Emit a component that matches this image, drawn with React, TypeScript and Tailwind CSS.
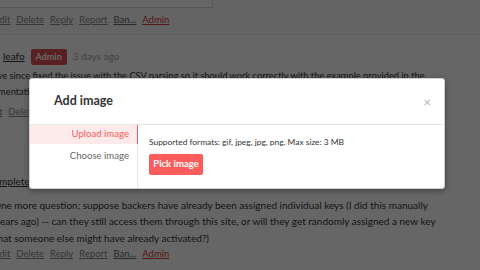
import React from 'react';

const font = { fontFamily: 'Lato, "Noto Sans", sans-serif' };

function ActionLinks({ className = '' }: { className?: string }) {
    return (
        <div className={`flex items-center gap-[6px] text-[9.5px] ${className}`}>
            <span className="text-[#888] underline">Edit</span>
            <span className="text-[#888] underline">Delete</span>
            <span className="text-[#888] underline">Reply</span>
            <span className="text-[#888] underline">Report</span>
            <span className="text-[#666] underline">Ban...</span>
            <span className="text-[#d93636] underline">Admin</span>
        </div>
    );
}

function AddImageModal() {
    return (
        <div className="w-[416px] rounded-[3px] border border-[#d0d0d0] bg-white shadow-[0_2px_6px_rgba(0,0,0,0.35)]">
            {/* Header */}
            <div className="flex h-[46px] items-center justify-between border-b border-[#e6e6e6] pl-[24px] pr-[13px]">
                <h2 className="text-[12.5px] font-bold text-[#333]">Add image</h2>
                <span className="mt-[2px] text-[13px] leading-none text-[#b4b4b4]">×</span>
            </div>

            {/* Body */}
            <div className="flex h-[63px]">
                <div className="w-[108px] border-r border-[#e6e6e6] text-right text-[9.6px]">
                    <div className="-mr-px flex h-[19px] items-center justify-end border-r border-[#fa5c5c] bg-[#fdeaea] pr-[8px] text-[#fa5c5c]">
                        Upload image
                    </div>
                    <div className="flex h-[24px] items-center justify-end pr-[8px] text-[#666]">
                        Choose image
                    </div>
                </div>
                <div className="flex flex-col items-start pl-[11px] pt-[12px]">
                    <p className="text-[8.4px] leading-[11px] text-[#333]">
                        Supported formats: gif, jpeg, jpg, png. Max size: 3 MB
                    </p>
                    <button className="mt-[6px] flex h-[21px] w-[54px] items-center justify-center rounded-[2px] bg-[#fa5c5c] text-[9.5px] font-bold text-white">
                        Pick image
                    </button>
                </div>
            </div>
        </div>
    );
}

export default function App() {
    return (
        <div className="relative h-[270px] w-[480px] overflow-hidden bg-white" style={font}>
            {/* Page behind the modal */}
            <div className="flex flex-col">
                {/* Previous comment */}
                <div className="h-[35px] border-b border-[#e4e4e4] bg-[#f9f9f9]">
                    <div className="h-[8px] w-[213px] rounded-br-[2px] border-b border-r border-[#d8d8d8] bg-white" />
                    <ActionLinks className="ml-[-6px] mt-[5px]" />
                </div>

                {/* Reply by leafo */}
                <div className="ml-[3px] flex items-center gap-[6px] pt-[14px] text-[10px]">
                    <span className="text-[#333] underline">leafo</span>
                    <span className="rounded-[2px] bg-[#dc5050] px-[5px] py-[1px] text-[9px] font-bold text-white">
                        Admin
                    </span>
                    <span className="text-[#a8a8a8]">3 days ago</span>
                </div>
                <div className="ml-[-7px] mt-[3px] w-[470px] whitespace-nowrap text-[9.3px] leading-[16px] text-[#333]">
                    <p>I&apos;ve since fixed the issue with the CSV parsing so it should work correctly with the example provided in the</p>
                    <p className="ml-[-15px]">documentation.</p>
                </div>
                <ActionLinks className="ml-[-14px] mt-[5px]" />

                {/* Next comment */}
                <div className="ml-[-11px] mt-[55px] text-[10px] text-[#333]">
                    <span className="underline">complete_games</span>
                </div>
                <div className="ml-[-7px] mt-[8px] whitespace-nowrap text-[10px] leading-[16.5px] text-[#333]">
                    <p>One more question: suppose backers have already been assigned individual keys (I did this manually</p>
                    <p className="ml-[2px]">years ago) -- can they still access them through this site, or will they get randomly assigned a new key</p>
                    <p className="ml-[1px]">that someone else might have already activated?)</p>
                </div>
                <ActionLinks className="ml-[-6px] mt-[1px]" />
            </div>

            {/* Overlay + modal */}
            <div className="absolute inset-0 flex items-start bg-black/60 pl-[29px] pt-[78px]">
                <AddImageModal />
            </div>
        </div>
    );
}
